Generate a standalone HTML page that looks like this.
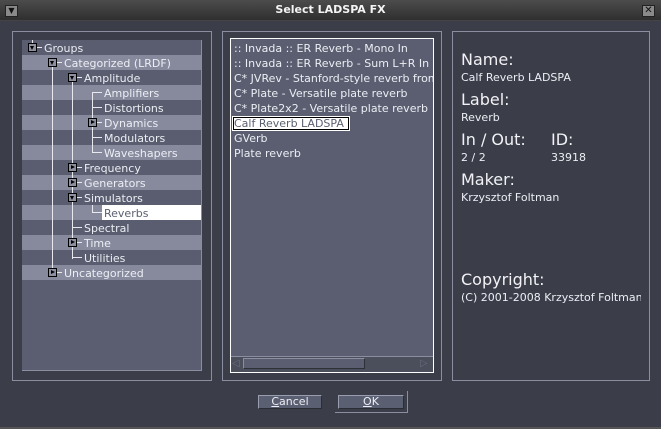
<!DOCTYPE html>
<html><head><meta charset="utf-8"><style>
*{margin:0;padding:0;box-sizing:border-box}
body{width:661px;height:429px;overflow:hidden;background:#3b3e49;font-family:"DejaVu Sans","Liberation Sans",sans-serif;font-size:11px;color:#eceef4;position:relative}
.a{position:absolute}
.t{position:absolute;white-space:nowrap;line-height:15px;margin-top:1px}
.frame{position:absolute;border:1px solid #8b8ea0}
.row{position:absolute;left:22px;width:179px;height:15px}
.box{position:absolute;width:9px;height:9px;background:#8d90a0;border:1px solid #000}
.box.o::after{content:"";position:absolute;left:1px;top:2px;border-left:2.5px solid transparent;border-right:2.5px solid transparent;border-top:4px solid #000}
.box.c::after{content:"";position:absolute;left:2px;top:1px;border-top:2.5px solid transparent;border-bottom:2.5px solid transparent;border-left:4px solid #000}
.vl{position:absolute;width:1px;background:#e8e8ee}
.hl{position:absolute;height:1px;background:#e8e8ee}
.h{position:absolute;font-size:16px;white-space:nowrap;color:#f2f2f6}
.btn{position:absolute;height:14px;background:#5b5f72;border-top:1px solid #9a9db0;border-left:1px solid #9a9db0;border-right:1px solid #2b2d35;border-bottom:1px solid #2b2d35;text-align:center;line-height:12px;font-size:11px}
</style></head><body>
<div class="a" style="left:0;top:0;width:661px;height:20px;background:linear-gradient(#4c4c4c,#2f2f2f)"></div>
<div class="a" style="left:0;top:20px;width:661px;height:1px;background:#444"></div>
<div class="t" style="left:0;top:1px;width:661px;text-align:center;font-weight:bold;color:#f4f4f4">Select LADSPA FX</div>
<div class="a" style="left:5px;top:5px;width:13px;height:12px;background:#8a8a8a;border:1px solid #222;font-size:8px;line-height:10px;text-align:center;color:#111">▼</div>
<div class="a" style="left:642px;top:5px;width:13px;height:12px;background:#8a8a8a;border:1px solid #222;font-size:10px;line-height:10px;text-align:center;color:#111;font-weight:bold">✕</div>

<div class="frame" style="left:12px;top:31px;width:200px;height:350px"></div>
<div class="frame" style="left:222px;top:31px;width:220px;height:350px"></div>
<div class="frame" style="left:452px;top:31px;width:198px;height:350px"></div>

<!-- tree -->
<div class="a" style="left:22px;top:40px;width:180px;height:331px;background:#5a5e70;border-right:1px solid #8b8ea0;border-bottom:1px solid #8b8ea0"></div>
<div class="row" style="top:40px;background:#595d6f"></div>
<div class="row" style="top:55px;background:#878a9d"></div>
<div class="row" style="top:70px;background:#595d6f"></div>
<div class="row" style="top:85px;background:#878a9d"></div>
<div class="row" style="top:100px;background:#595d6f"></div>
<div class="row" style="top:115px;background:#878a9d"></div>
<div class="row" style="top:130px;background:#595d6f"></div>
<div class="row" style="top:145px;background:#878a9d"></div>
<div class="row" style="top:160px;background:#595d6f"></div>
<div class="row" style="top:175px;background:#878a9d"></div>
<div class="row" style="top:190px;background:#595d6f"></div>
<div class="row" style="top:205px;background:#878a9d"></div>
<div class="row" style="top:220px;background:#595d6f"></div>
<div class="row" style="top:235px;background:#878a9d"></div>
<div class="row" style="top:250px;background:#595d6f"></div>
<div class="row" style="top:265px;background:#878a9d"></div>
<div class="a" style="left:102px;top:205px;width:99px;height:15px;background:#fff"></div>

<div class="vl" style="left:32px;top:40px;height:8px"></div>
<div class="vl" style="left:52px;top:62px;height:211px"></div>
<div class="vl" style="left:72px;top:77px;height:182px"></div>
<div class="vl" style="left:92px;top:92px;height:61px"></div>
<div class="vl" style="left:92px;top:205px;height:8px"></div>

<div class="hl" style="left:32px;top:47px;width:10px"></div>
<div class="hl" style="left:52px;top:62px;width:10px"></div>
<div class="hl" style="left:72px;top:77px;width:10px"></div>
<div class="hl" style="left:92px;top:92px;width:10px"></div>
<div class="hl" style="left:92px;top:107px;width:10px"></div>
<div class="hl" style="left:92px;top:122px;width:10px"></div>
<div class="hl" style="left:92px;top:137px;width:10px"></div>
<div class="hl" style="left:92px;top:152px;width:10px"></div>
<div class="hl" style="left:72px;top:167px;width:10px"></div>
<div class="hl" style="left:72px;top:182px;width:10px"></div>
<div class="hl" style="left:72px;top:197px;width:10px"></div>
<div class="hl" style="left:92px;top:212px;width:10px"></div>
<div class="hl" style="left:72px;top:227px;width:10px"></div>
<div class="hl" style="left:72px;top:242px;width:10px"></div>
<div class="hl" style="left:72px;top:257px;width:10px"></div>
<div class="hl" style="left:52px;top:272px;width:10px"></div>

<div class="box o" style="left:28px;top:43px"></div>
<div class="box o" style="left:48px;top:58px"></div>
<div class="box o" style="left:68px;top:73px"></div>
<div class="box c" style="left:88px;top:118px"></div>
<div class="box c" style="left:68px;top:163px"></div>
<div class="box c" style="left:68px;top:178px"></div>
<div class="box o" style="left:68px;top:193px"></div>
<div class="box c" style="left:68px;top:238px"></div>
<div class="box c" style="left:48px;top:268px"></div>

<div class="t" style="left:44px;top:40px">Groups</div>
<div class="t" style="left:64px;top:55px">Categorized (LRDF)</div>
<div class="t" style="left:84px;top:70px">Amplitude</div>
<div class="t" style="left:104px;top:85px">Amplifiers</div>
<div class="t" style="left:104px;top:100px">Distortions</div>
<div class="t" style="left:104px;top:115px">Dynamics</div>
<div class="t" style="left:104px;top:130px">Modulators</div>
<div class="t" style="left:104px;top:145px">Waveshapers</div>
<div class="t" style="left:84px;top:160px">Frequency</div>
<div class="t" style="left:84px;top:175px">Generators</div>
<div class="t" style="left:84px;top:190px">Simulators</div>
<div class="t" style="left:104px;top:205px;color:#5a5e70">Reverbs</div>
<div class="t" style="left:84px;top:220px">Spectral</div>
<div class="t" style="left:84px;top:235px">Time</div>
<div class="t" style="left:84px;top:250px">Utilities</div>
<div class="t" style="left:64px;top:265px">Uncategorized</div>

<!-- list -->
<div class="a" style="left:230px;top:38px;width:204px;height:335px;background:#5a5e70;border:1px solid #fff;overflow:hidden">
<div class="t" style="left:3px;top:1px">:: Invada :: ER Reverb - Mono In</div>
<div class="t" style="left:3px;top:16px">:: Invada :: ER Reverb - Sum L+R In</div>
<div class="t" style="left:3px;top:31px">C* JVRev - Stanford-style reverb from</div>
<div class="t" style="left:3px;top:46px">C* Plate - Versatile plate reverb</div>
<div class="t" style="left:3px;top:61px">C* Plate2x2 - Versatile plate reverb</div>
<div class="a" style="left:1px;top:77px;width:118px;height:15px;border:1px solid #fff;box-shadow:0 0 0 1px #000 inset;background:#fff"></div>
<div class="t" style="left:3px;top:76px;color:#5a5e70">Calf Reverb LADSPA</div>
<div class="t" style="left:3px;top:91px">GVerb</div>
<div class="t" style="left:3px;top:106px">Plate reverb</div>
<div class="a" style="left:0;top:317px;width:202px;height:1px;background:#8b8ea0"></div>
<div class="a" style="left:0;top:318px;width:202px;height:15px;background:#4b4e5b"></div>
<div class="a" style="left:12px;top:319px;width:122px;height:11px;background:#5a5e70;border-top:1px solid #8b8ea0;border-left:1px solid #8b8ea0;border-right:1px solid #2e3038;border-bottom:1px solid #2e3038"></div>
<div class="t" style="left:1px;top:316px;color:#6b6e80;font-size:10px">◁</div>
<div class="t" style="left:189px;top:316px;color:#6b6e80;font-size:10px">▷</div>
</div>

<!-- info -->
<div class="h" style="left:461px;top:50px">Name:</div>
<div class="t" style="left:461px;top:69px">Calf Reverb LADSPA</div>
<div class="h" style="left:461px;top:90px">Label:</div>
<div class="t" style="left:461px;top:109px">Reverb</div>
<div class="h" style="left:461px;top:130px">In / Out:</div>
<div class="h" style="left:551px;top:130px">ID:</div>
<div class="t" style="left:461px;top:149px">2 / 2</div>
<div class="t" style="left:551px;top:149px">33918</div>
<div class="h" style="left:461px;top:170px">Maker:</div>
<div class="t" style="left:461px;top:189px">Krzysztof Foltman</div>
<div class="h" style="left:461px;top:270px">Copyright:</div>
<div class="a" style="left:461px;top:289px;width:180px;height:17px;overflow:hidden"><div class="t" style="left:0;top:0">(C) 2001-2008 Krzysztof Foltman</div></div>

<!-- buttons -->
<div class="btn" style="left:258px;top:395px;width:64px"><u>C</u>ancel</div>
<div class="btn" style="left:338px;top:395px;width:66px"><u>O</u>K</div>
<div class="a" style="left:407px;top:391px;width:1px;height:22px;background:#8b8ea0"></div>
<div class="a" style="left:335px;top:412px;width:73px;height:1px;background:#8b8ea0"></div>
<div class="a" style="left:0;top:427px;width:661px;height:2px;background:#555"></div>
</body></html>
